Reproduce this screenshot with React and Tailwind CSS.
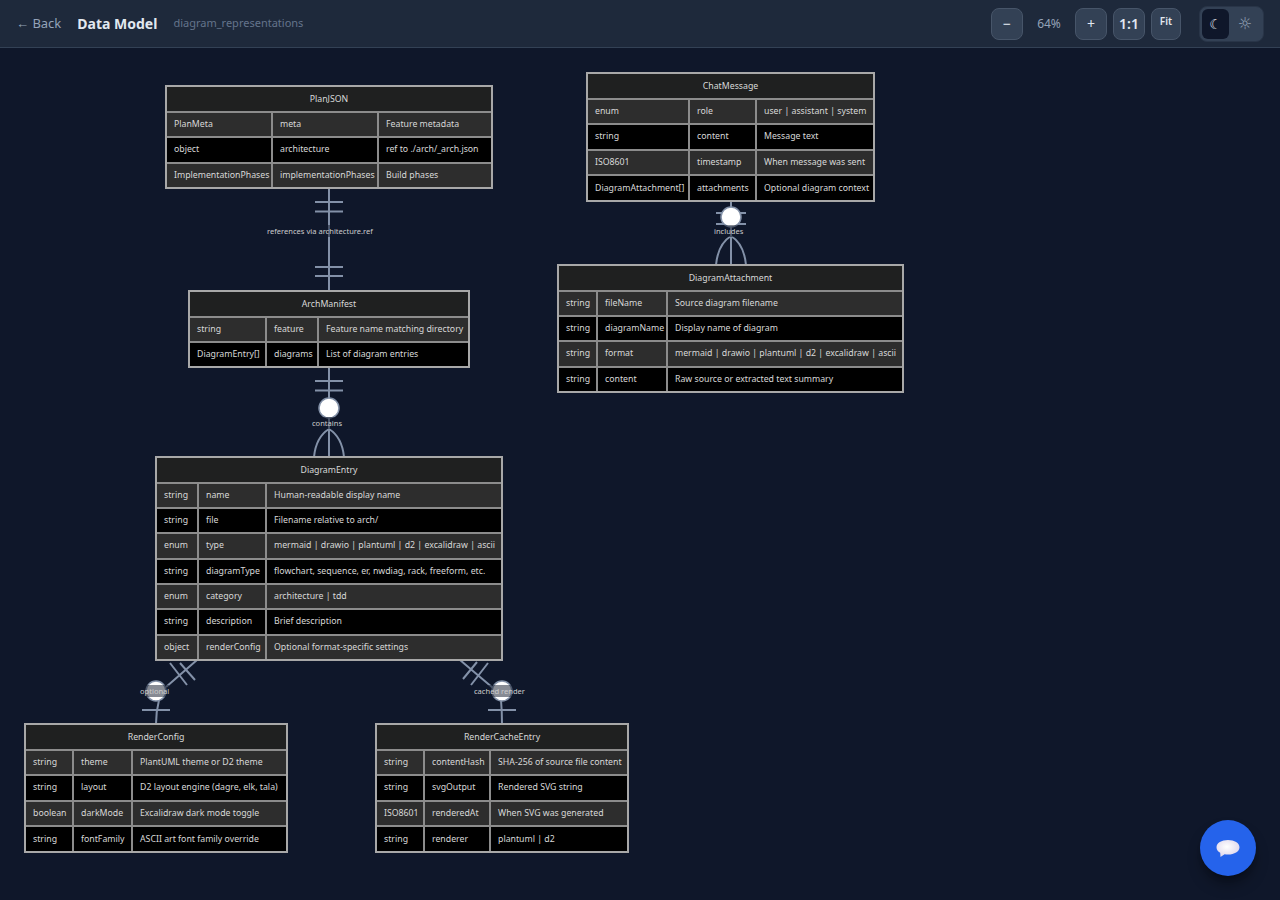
import React from "react";

const entities = [
  {
    name: "PlanJSON",
    box: "left-[165px] top-[85px] w-[328px] h-[104px]",
    cols: "grid-cols-[104px_106px_1fr]",
    rows: [
      ["PlanMeta", "meta", "Feature metadata"],
      ["object", "architecture", "ref to ./arch/_arch.json"],
      ["ImplementationPhases", "implementationPhases", "Build phases"],
    ],
  },
  {
    name: "ArchManifest",
    box: "left-[188px] top-[290px] w-[282px] h-[78px]",
    cols: "grid-cols-[75px_52px_1fr]",
    rows: [
      ["string", "feature", "Feature name matching directory"],
      ["DiagramEntry[]", "diagrams", "List of diagram entries"],
    ],
  },
  {
    name: "DiagramEntry",
    box: "left-[155px] top-[456px] w-[348px] h-[205px]",
    cols: "grid-cols-[40px_68px_1fr]",
    rows: [
      ["string", "name", "Human-readable display name"],
      ["string", "file", "Filename relative to arch/"],
      ["enum", "type", "mermaid | drawio | plantuml | d2 | excalidraw | ascii"],
      ["string", "diagramType", "flowchart, sequence, er, nwdiag, rack, freeform, etc."],
      ["enum", "category", "architecture | tdd"],
      ["string", "description", "Brief description"],
      ["object", "renderConfig", "Optional format-specific settings"],
    ],
  },
  {
    name: "RenderConfig",
    box: "left-[24px] top-[723px] w-[264px] h-[130px]",
    cols: "grid-cols-[46px_59px_1fr]",
    rows: [
      ["string", "theme", "PlantUML theme or D2 theme"],
      ["string", "layout", "D2 layout engine (dagre, elk, tala)"],
      ["boolean", "darkMode", "Excalidraw dark mode toggle"],
      ["string", "fontFamily", "ASCII art font family override"],
    ],
  },
  {
    name: "RenderCacheEntry",
    box: "left-[375px] top-[723px] w-[254px] h-[130px]",
    cols: "grid-cols-[46px_66px_1fr]",
    rows: [
      ["string", "contentHash", "SHA-256 of source file content"],
      ["string", "svgOutput", "Rendered SVG string"],
      ["ISO8601", "renderedAt", "When SVG was generated"],
      ["string", "renderer", "plantuml | d2"],
    ],
  },
  {
    name: "ChatMessage",
    box: "left-[586px] top-[72px] w-[289px] h-[130px]",
    cols: "grid-cols-[100px_67px_1fr]",
    rows: [
      ["enum", "role", "user | assistant | system"],
      ["string", "content", "Message text"],
      ["ISO8601", "timestamp", "When message was sent"],
      ["DiagramAttachment[]", "attachments", "Optional diagram context"],
    ],
  },
  {
    name: "DiagramAttachment",
    box: "left-[557px] top-[264px] w-[347px] h-[129px]",
    cols: "grid-cols-[37px_70px_1fr]",
    rows: [
      ["string", "fileName", "Source diagram filename"],
      ["string", "diagramName", "Display name of diagram"],
      ["string", "format", "mermaid | drawio | plantuml | d2 | excalidraw | ascii"],
      ["string", "content", "Raw source or extracted text summary"],
    ],
  },
];

const labels = [
  { text: "references via architecture.ref", pos: "left-[267px] top-[225px]" },
  { text: "contains", pos: "left-[312px] top-[417px]" },
  { text: "includes", pos: "left-[714px] top-[225px]" },
  { text: "optional", pos: "left-[140px] top-[685px]" },
  { text: "cached render", pos: "left-[474px] top-[685px]" },
];

const Entity = ({ entity }) => (
  <div
    className={`absolute flex flex-col border-2 border-[#a8a8a8] font-['Noto_Sans',sans-serif] text-[8.750px] text-[#d8d8d8] ${entity.box}`}
  >
    <div className="flex h-[23.500px] shrink-0 items-center justify-center bg-[#1f2020] pt-px">{entity.name}</div>
    {entity.rows.map((row, index) => (
      <div
        key={index}
        className={`grid flex-1 border-t-2 border-[#8c8c8c] ${entity.cols} ${
          index % 2 === 0 ? "bg-[#2d2d2d]" : "bg-black"
        }`}
      >
        {row.map((cell, c) => (
          <div
            key={c}
            className={`flex items-center whitespace-nowrap pl-[7px] ${c > 0 ? "border-l-2 border-[#8c8c8c]" : ""}`}
          >
            {cell}
          </div>
        ))}
      </div>
    ))}
  </div>
);

const Connectors = () => (
  <svg className="absolute left-0 top-0 h-full w-full" viewBox="0 0 1280 900" fill="none">
    <g stroke="#8391a8" strokeWidth="2">
      {/* PlanJSON - ArchManifest */}
      <path d="M329 188V291M315 202H343M315 211.500H343M315 267H343M315 276H343" />
      {/* ArchManifest - DiagramEntry */}
      <path d="M329 367V457M315 381H343M315 390.500H343M329 429Q316 437 314 457M329 429Q342 437 344 457" />
      <circle cx="329" cy="408" r="10" fill="#fff" strokeWidth="1.500" />
      {/* ChatMessage - DiagramAttachment */}
      <path d="M731 201V265M716 213H746M716 224H746M731 236Q718 244 716 265M731 236Q744 244 746 265" />
      <circle cx="731" cy="217" r="10" fill="#fff" strokeWidth="1.500" />
      {/* DiagramEntry - RenderConfig */}
      <path d="M197 660L166 687M170 663L187 685M180 663L195 680M159 700Q156 712 156 724M142 710H170" />
      <circle cx="156" cy="691" r="10" fill="#fff" strokeWidth="1.500" />
      {/* DiagramEntry - RenderCacheEntry */}
      <path d="M460 660L493 688M477 662L463 679M488 663L471 685M501 700Q502 712 502 724M488 710H516" />
      <circle cx="502" cy="691" r="10" fill="#fff" strokeWidth="1.500" />
    </g>
  </svg>
);

const ZoomButton = ({ children, className = "" }) => (
  <button
    className={`flex h-8 items-center justify-center rounded-lg border border-[#475569] bg-[#334155] text-[#e2e8f0] ${className}`}
  >
    {children}
  </button>
);

export default function App() {
  return (
    <div className="relative h-[900px] w-[1280px] overflow-hidden bg-[#0f172a] font-['Noto_Sans',sans-serif]">
      {/* Header */}
      <header className="flex h-12 items-center justify-between border-b border-[#334155] bg-[#1e293b] pl-4 pr-4">
        <div className="flex items-center">
          <span className="text-[13px] text-[#94a3b8]">← Back</span>
          <h1 className="ml-4 text-sm font-bold text-[#e2e8f0]">Data Model</h1>
          <span className="ml-4 text-[11px] text-[#64748b]">diagram_representations</span>
        </div>
        <div className="flex items-center">
          <ZoomButton className="w-8 text-sm">−</ZoomButton>
          <span className="w-[52px] text-center text-xs text-[#94a3b8]">64%</span>
          <ZoomButton className="w-8 text-sm">+</ZoomButton>
          <ZoomButton className="ml-1.5 w-8 text-sm font-semibold">1:1</ZoomButton>
          <ZoomButton className="ml-1.5 w-[30px] pb-1 text-[10px] font-semibold">Fit</ZoomButton>
          <div className="ml-[18px] flex h-9 w-[65px] rounded-lg border border-[#293548] bg-[#334155] p-0.5 font-['DejaVu_Sans',sans-serif]">
            <span className="flex w-[27px] items-center justify-center rounded-md bg-[#0f172a] text-sm text-[#e2e8f0]">☾</span>
            <span className="flex flex-1 items-center justify-center text-base text-[#94a3b8]">☼</span>
          </div>
        </div>
      </header>

      {/* Diagram canvas */}
      <Connectors />
      {entities.map((entity) => (
        <Entity key={entity.name} entity={entity} />
      ))}
      {labels.map((label) => (
        <span
          key={label.text}
          className={`absolute whitespace-nowrap bg-[#0f172a]/50 font-['Noto_Sans',sans-serif] text-[7.550px] leading-3 text-[#ccc] ${label.pos}`}
        >
          {label.text}
        </span>
      ))}

      {/* Chat button */}
      <button className="absolute bottom-6 right-6 flex h-14 w-14 items-center justify-center rounded-full bg-[#2563eb] shadow-lg shadow-black/40">
        <svg className="mt-0.5" width="24" height="20" viewBox="0 0 24 20">
          <defs>
            <radialGradient id="bubble" cx="0.45" cy="0.4" r="0.65">
              <stop offset="0" stopColor="#ffffff" />
              <stop offset="1" stopColor="#dcd3ea" />
            </radialGradient>
          </defs>
          <path d="M12 1C5.600 1 .5 4 .5 8.300c0 2.300 1.400 4.200 3.700 5.500L4.500 18L8.600 15.300C9.700 15.500 10.800 15.600 12 15.600C18.400 15.600 23.500 12.600 23.500 8.300C23.500 4 18.400 1 12 1Z" fill="url(#bubble)" />
        </svg>
      </button>
    </div>
  );
}
